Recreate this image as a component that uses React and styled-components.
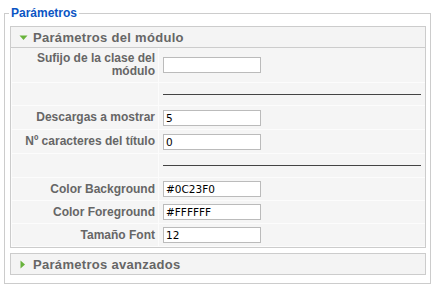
import React from 'react';
import styled, { createGlobalStyle } from 'styled-components';

const GlobalStyle = createGlobalStyle`
  html, body {
    margin: 0;
    padding: 0;
    background: #fff;
    font-family: "Liberation Sans", Arial, sans-serif;
  }
`;

const Fieldset = styled.fieldset`
  box-sizing: border-box;
  width: 427px;
  margin: 6px 0 0 4px;
  padding: 6px 4px 8px 5px;
  border: 1px solid #ccc;
  min-inline-size: 0;
`;

const Legend = styled.legend`
  padding: 0 2px;
  margin-left: -1px;
  color: #0b55c4;
  font-size: 12px;
  font-weight: bold;
  line-height: 14px;
`;

const Panel = styled.div`
  border: 1px solid #ccc;
  margin-bottom: ${(p) => (p.$last ? '0' : '5px')};
  background: #f6f6f6;
`;

const PanelHeader = styled.div`
  display: flex;
  align-items: center;
  height: 20px;
  padding-left: 8px;
  background: #f4f4f4;
  border-bottom: ${(p) => (p.$open ? '1px solid #ccc' : 'none')};
  color: #666;
  font-size: 13px;
  font-weight: bold;
  letter-spacing: 0.3px;
`;

const Arrow = styled.svg`
  width: 9px;
  height: 9px;
  margin-right: 5px;
  flex: none;
`;

const ParamGrid = styled.div`
  display: grid;
  grid-template-columns: 146px 1fr;
  gap: 1px;
  padding: 0 0 1px 1px;
  background: #fcfcfc;
`;

const KeyCell = styled.div`
  display: flex;
  align-items: center;
  justify-content: flex-end;
  text-align: right;
  height: ${(p) => p.$h}px;
  padding: 0 3px 0 12px;
  background: #f5f5f5;
  color: #666;
  font-size: 12px;
  font-weight: bold;
  line-height: 13px;
`;

const ValueCell = styled.div`
  display: flex;
  align-items: center;
  height: ${(p) => p.$h}px;
  padding: 0 4px;
  background: #f5f5f5;
`;

const TextInput = styled.input`
  box-sizing: border-box;
  width: 98px;
  height: 16px;
  margin: 0;
  padding: 0 2px;
  border: 1px solid #bbb;
  background: #fff;
  color: #000;
  font-family: "DejaVu Sans", Tahoma, sans-serif;
  font-size: 10.5px;
  outline: none;
`;

const Rule = styled.div`
  flex: 1;
  border-top: 1px solid #444;
`;

const rows = [
  { label: 'Sufijo de la clase del módulo', value: '', h: 34 },
  { spacer: true, h: 22 },
  { label: 'Descargas a mostrar', value: '5', h: 23 },
  { label: 'Nº caracteres del título', value: '0', h: 23 },
  { spacer: true, h: 23 },
  { label: 'Color Background', value: '#0C23F0', h: 22 },
  { label: 'Color Foreground', value: '#FFFFFF', h: 22 },
  { label: 'Tamaño Font', value: '12', h: 22 },
];

function DownArrow() {
  return (
    <Arrow viewBox="0 0 9 9">
      <polygon points="0.5,2.5 8.5,2.5 4.5,7" fill="#69b33c" />
    </Arrow>
  );
}

function RightArrow() {
  return (
    <Arrow viewBox="0 0 9 9">
      <polygon points="1.5,0.5 6,4.5 1.5,8.5" fill="#69b33c" />
    </Arrow>
  );
}

export default function App() {
  return (
    <>
      <GlobalStyle />
      <Fieldset>
        <Legend>Parámetros</Legend>
        <Panel>
          <PanelHeader $open>
            <DownArrow />
            Parámetros del módulo
          </PanelHeader>
          <ParamGrid>
            {rows.map((row, i) => (
              <React.Fragment key={i}>
                <KeyCell $h={row.h}>{row.label}</KeyCell>
                <ValueCell $h={row.h}>
                  {row.spacer ? <Rule /> : <TextInput type="text" defaultValue={row.value} />}
                </ValueCell>
              </React.Fragment>
            ))}
          </ParamGrid>
        </Panel>
        <Panel $last>
          <PanelHeader>
            <RightArrow />
            Parámetros avanzados
          </PanelHeader>
        </Panel>
      </Fieldset>
    </>
  );
}
